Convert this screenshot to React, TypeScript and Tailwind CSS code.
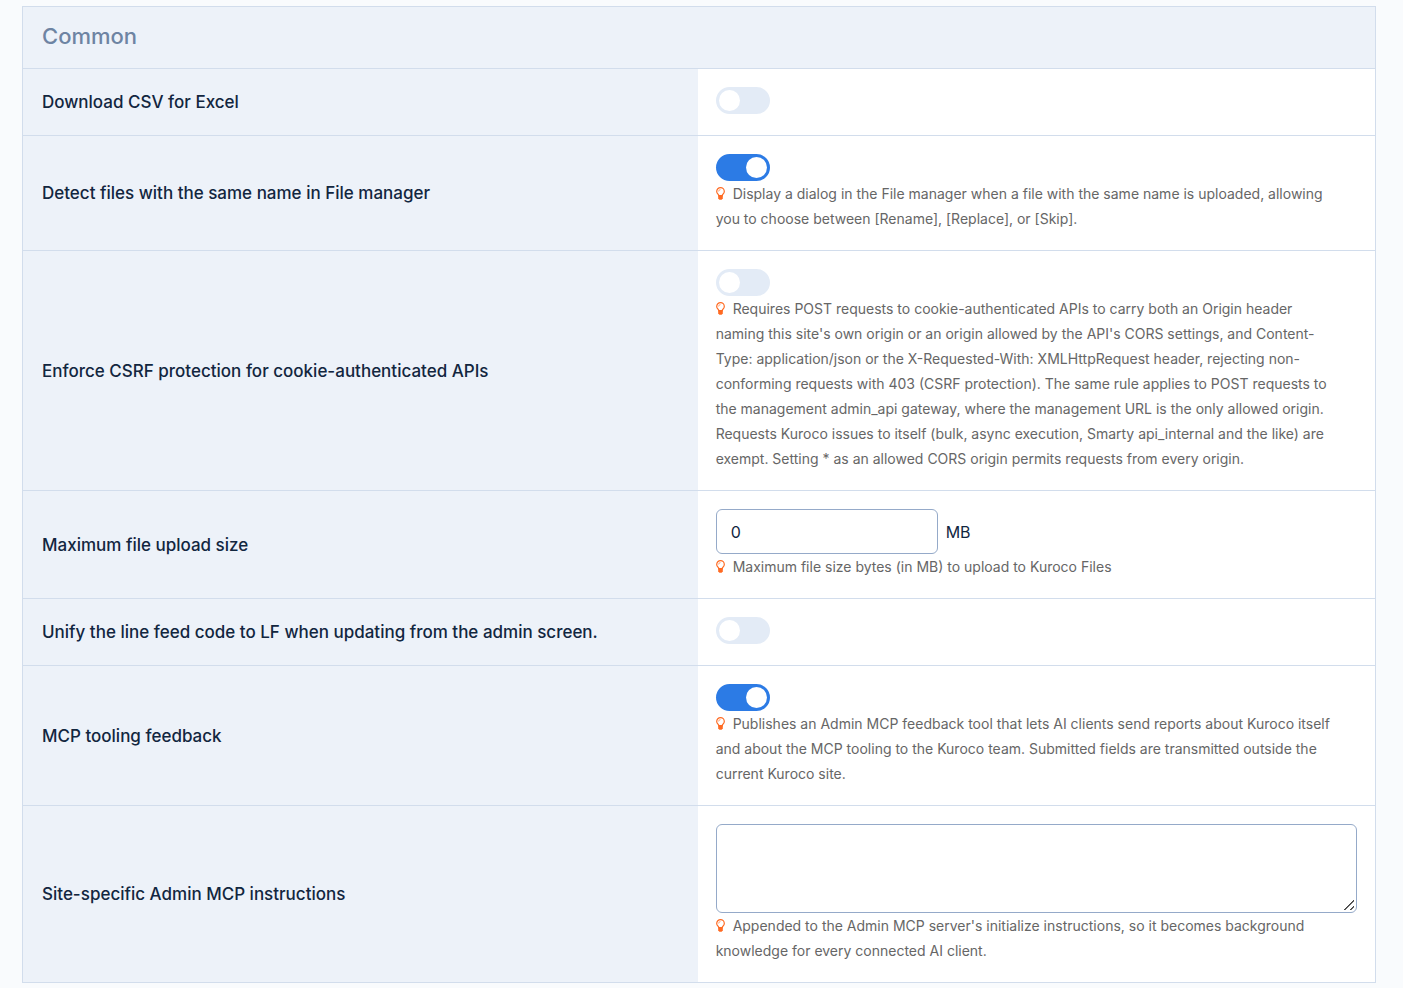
import { useState } from "react";
import type { ReactNode } from "react";

interface RowProps {
  label: string;
  htmlFor: string;
  children: ReactNode;
}

function Row({ label, htmlFor, children }: RowProps) {
  return (
    <tr className="border-t border-[#d2ddec]">
      <th
        scope="row"
        className="bg-[#edf2f9] px-[19px] text-left align-middle text-[17px] leading-6 font-medium"
      >
        <label htmlFor={htmlFor}>{label}</label>
      </th>
      <td className="bg-white px-[18px] pt-[18px] pb-[19px] align-top">
        <div className="min-h-[29px]">{children}</div>
      </td>
    </tr>
  );
}

function Toggle({ id, initial = false }: { id: string; initial?: boolean }) {
  const [checked, setChecked] = useState(initial);

  return (
    <input
      id={id}
      type="checkbox"
      role="switch"
      checked={checked}
      onChange={(e) => setChecked(e.target.checked)}
      className="block h-[27px] w-[54px] cursor-pointer appearance-none rounded-full bg-[#e3ebf6] p-[3px] before:block before:size-[21px] before:rounded-full before:bg-white checked:bg-[#2c7be5] checked:before:ml-[27px]"
    />
  );
}

function Bulb() {
  return (
    <svg
      viewBox="0 0 9 13"
      aria-hidden="true"
      className="mr-2 inline-block h-[13px] w-[9px] align-[-1px]"
    >
      <path
        d="M2.9 8.8C2.7 7.5.7 6.5.7 4.4a3.8 3.8 0 0 1 7.6 0c0 2.1-2 3.1-2.2 4.4z"
        fill="none"
        stroke="#ff6a22"
        strokeWidth="1.2"
      />
      <path d="M2.6 4.5a1.9 1.9 0 0 1 1.9-1.9" fill="none" stroke="#ff6a22" strokeWidth=".6" />
      <path d="M2.2 8h4.6v3.4L5.6 12.8H3.4L2.2 11.4z" fill="#ff6a22" />
    </svg>
  );
}

function Hint({ children }: { children: ReactNode }) {
  return (
    <p className="text-sm leading-[25px] text-[#666]">
      <Bulb />
      {children}
    </p>
  );
}

export default function App() {
  const [maxSize, setMaxSize] = useState("0");
  const [instructions, setInstructions] = useState("");

  return (
    <main className="min-h-screen bg-[#f9fbfd] pt-[6px] pr-[27px] pb-[5px] pl-[22px] font-['Inter','Liberation_Sans',sans-serif] text-[#12263f]">
      <table className="w-full table-fixed border-collapse border border-[#d2ddec]">
        <colgroup>
          <col className="w-[49.9%]" />
          <col />
        </colgroup>
        <thead>
          <tr>
            <th
              colSpan={2}
              className="h-[62px] bg-[#edf2f9] px-[19px] pb-[2px] text-left text-[22px] font-medium text-[#6e84a3]"
            >
              Common
            </th>
          </tr>
        </thead>
        <tbody>
          <Row label="Download CSV for Excel" htmlFor="csv">
            <Toggle id="csv" />
          </Row>

          <Row label="Detect files with the same name in File manager" htmlFor="detect">
            <Toggle id="detect" initial />
            <Hint>
              Display a dialog in the File manager when a file with the same name is
              uploaded, allowing <br />
              you to choose between [Rename], [Replace], or [Skip].
            </Hint>
          </Row>

          <Row label="Enforce CSRF protection for cookie-authenticated APIs" htmlFor="csrf">
            <Toggle id="csrf" />
            <Hint>
              Requires POST requests to cookie-authenticated APIs to carry both an Origin
              header <br />
              naming this site's own origin or an origin allowed by the API's CORS
              settings, and Content-
              <br />
              Type: application/json or the X-Requested-With: XMLHttpRequest header,
              rejecting non-
              <br />
              conforming requests with 403 (CSRF protection). The same rule applies to
              POST requests to <br />
              the management admin_api gateway, where the management URL is the only
              allowed origin. <br />
              Requests Kuroco issues to itself (bulk, async execution, Smarty api_internal
              and the like) are <br />
              exempt. Setting * as an allowed CORS origin permits requests from every
              origin.
            </Hint>
          </Row>

          <Row label="Maximum file upload size" htmlFor="maxSize">
            <div className="flex items-center gap-2">
              <input
                id="maxSize"
                type="text"
                value={maxSize}
                onChange={(e) => setMaxSize(e.target.value)}
                className="h-[45px] w-[222px] rounded-md border border-[#95aac9] bg-white px-[14px] text-base"
              />
              <span>MB</span>
            </div>
            <Hint>Maximum file size bytes (in MB) to upload to Kuroco Files</Hint>
          </Row>

          <Row
            label="Unify the line feed code to LF when updating from the admin screen."
            htmlFor="lineFeed"
          >
            <Toggle id="lineFeed" />
          </Row>

          <Row label="MCP tooling feedback" htmlFor="feedback">
            <Toggle id="feedback" initial />
            <Hint>
              Publishes an Admin MCP feedback tool that lets AI clients send reports about
              Kuroco itself <br />
              and about the MCP tooling to the Kuroco team. Submitted fields are
              transmitted outside the <br />
              current Kuroco site.
            </Hint>
          </Row>

          <Row label="Site-specific Admin MCP instructions" htmlFor="instructions">
            <textarea
              id="instructions"
              value={instructions}
              onChange={(e) => setInstructions(e.target.value)}
              className="block h-[89px] w-full resize rounded-md border border-[#95aac9] bg-white px-[14px] py-2 text-base [&::-webkit-resizer]:bg-[linear-gradient(135deg,transparent_58%,#444_60%,#444_65%,transparent_67%,transparent_81%,#444_83%,#444_88%,transparent_90%)] [&::-webkit-resizer]:bg-[length:13px_13px] [&::-webkit-resizer]:bg-no-repeat"
            />
            <Hint>
              Appended to the Admin MCP server's initialize instructions, so it becomes
              background <br />
              knowledge for every connected AI client.
            </Hint>
          </Row>
        </tbody>
      </table>
    </main>
  );
}
